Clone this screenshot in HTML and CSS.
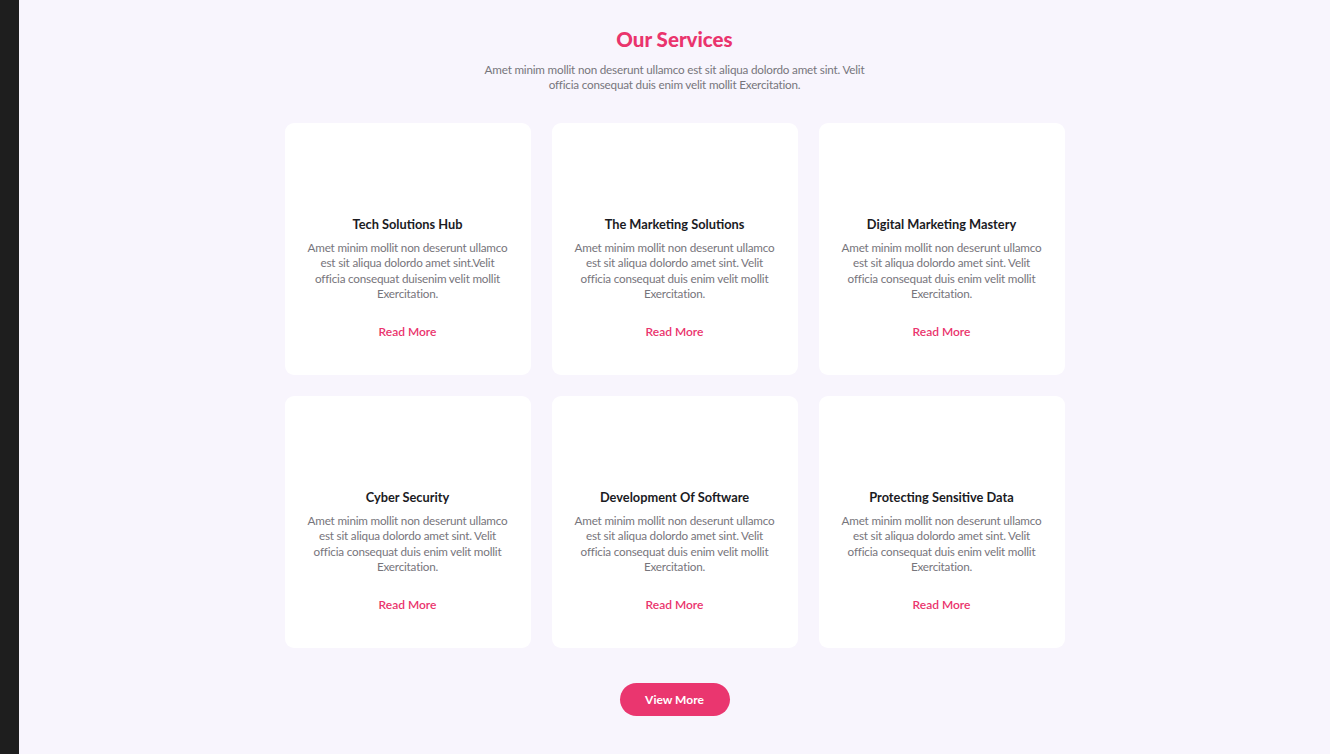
FILE: index.html
```html
<!DOCTYPE html>
<html lang="en">
<head>
<meta charset="utf-8">
<title>Our Services</title>
<link rel="stylesheet" href="styles.css">
</head>
<body>
<div class="layout">
  <aside class="side"></aside>
  <main class="services">
    <h2 class="services-title">Our Services</h2>
    <p class="services-sub">Amet minim mollit non deserunt ullamco est sit aliqua dolordo amet sint. Velit officia consequat duis enim velit mollit Exercitation.</p>
    <div class="grid">
      <div class="card">
        <div class="card-icon"></div>
        <h3 class="card-title">Tech Solutions Hub</h3>
        <p class="card-text">Amet minim mollit non deserunt ullamco est sit aliqua dolordo amet sint.Velit officia consequat duisenim velit mollit Exercitation.</p>
        <a class="card-link" href="#">Read More</a>
      </div>
      <div class="card">
        <div class="card-icon"></div>
        <h3 class="card-title">The Marketing Solutions</h3>
        <p class="card-text">Amet minim mollit non deserunt ullamco est sit aliqua dolordo amet sint. Velit officia consequat duis enim velit mollit Exercitation.</p>
        <a class="card-link" href="#">Read More</a>
      </div>
      <div class="card">
        <div class="card-icon"></div>
        <h3 class="card-title">Digital Marketing Mastery</h3>
        <p class="card-text">Amet minim mollit non deserunt ullamco est sit aliqua dolordo amet sint. Velit officia consequat duis enim velit mollit Exercitation.</p>
        <a class="card-link" href="#">Read More</a>
      </div>
      <div class="card">
        <div class="card-icon"></div>
        <h3 class="card-title">Cyber Security</h3>
        <p class="card-text">Amet minim mollit non deserunt ullamco est sit aliqua dolordo amet sint. Velit officia consequat duis enim velit mollit Exercitation.</p>
        <a class="card-link" href="#">Read More</a>
      </div>
      <div class="card">
        <div class="card-icon"></div>
        <h3 class="card-title">Development Of Software</h3>
        <p class="card-text">Amet minim mollit non deserunt ullamco est sit aliqua dolordo amet sint. Velit officia consequat duis enim velit mollit Exercitation.</p>
        <a class="card-link" href="#">Read More</a>
      </div>
      <div class="card">
        <div class="card-icon"></div>
        <h3 class="card-title">Protecting Sensitive Data</h3>
        <p class="card-text">Amet minim mollit non deserunt ullamco est sit aliqua dolordo amet sint. Velit officia consequat duis enim velit mollit Exercitation.</p>
        <a class="card-link" href="#">Read More</a>
      </div>
    </div>
    <a class="view-more" href="#">View More</a>
  </main>
</div>
</body>
</html>
```
FILE: styles.css
```css
* { box-sizing: border-box; }
html, body {
  margin: 0;
  padding: 0;
  height: 754px;
  overflow: hidden;
}
body {
  font-family: "Lato", "Noto Sans", sans-serif;
  background: #f8f5fd;
}
.layout {
  display: flex;
  height: 754px;
}
.side {
  width: 19px;
  flex: none;
  background: #1e1e1e;
}
.services {
  flex: 1;
  display: flex;
  flex-direction: column;
  align-items: center;
  padding-top: 26px;
}
.services-title {
  margin: 0;
  font-size: 20.5px;
  line-height: 26px;
  font-weight: 900;
  color: #ea346d;
}
.services-sub {
  margin: 10px 0 0;
  width: 394px;
  text-align: center;
  font-size: 11.7px;
  letter-spacing: -0.2px;
  line-height: 15px;
  color: #77757c;
}
.grid {
  margin-top: 31px;
  display: grid;
  grid-template-columns: repeat(3, 246px);
  gap: 21px;
}
.card {
  background: #ffffff;
  border-radius: 9px;
  height: 252px;
  padding: 0 21px;
  display: flex;
  flex-direction: column;
  align-items: center;
  text-align: center;
}
.card-icon {
  height: 92px;
  flex: none;
}
.card-title {
  margin: 0;
  font-size: 12.8px;
  line-height: 18px;
  font-weight: 700;
  color: #1b1b1f;
}
.card-text {
  margin: 7px 0 0;
  font-size: 11.7px;
  letter-spacing: -0.2px;
  line-height: 15.3px;
  color: #77757c;
}
.card-link {
  margin-top: 23px;
  font-size: 12px;
  line-height: 15px;
  font-weight: 600;
  color: #ea346d;
  text-decoration: none;
}
.view-more {
  margin-top: 35px;
  width: 110px;
  height: 33px;
  border-radius: 17px;
  background: #ea366f;
  color: #ffffff;
  font-size: 12px;
  font-weight: 700;
  text-decoration: none;
  display: flex;
  align-items: center;
  justify-content: center;
}
```
